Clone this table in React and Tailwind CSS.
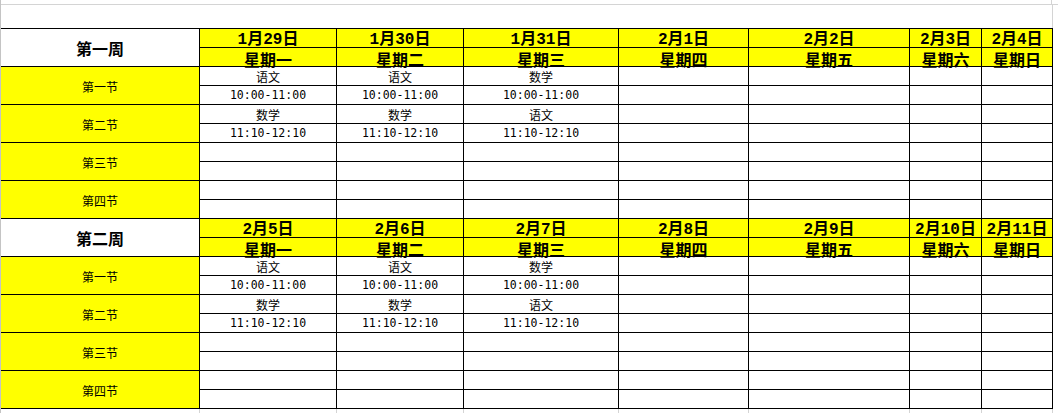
const weeks = [
  {
    name: "第一周",
    days: [
      ["1月29日", "星期一"],
      ["1月30日", "星期二"],
      ["1月31日", "星期三"],
      ["2月1日", "星期四"],
      ["2月2日", "星期五"],
      ["2月3日", "星期六"],
      ["2月4日", "星期日"],
    ],
  },
  {
    name: "第二周",
    days: [
      ["2月5日", "星期一"],
      ["2月6日", "星期二"],
      ["2月7日", "星期三"],
      ["2月8日", "星期四"],
      ["2月9日", "星期五"],
      ["2月10日", "星期六"],
      ["2月11日", "星期日"],
    ],
  },
];

// each period = two rows: subject, then time
const periods = [
  {
    name: "第一节",
    top: ["语文", "语文", "数学", "", "", "", ""],
    bottom: ["10:00-11:00", "10:00-11:00", "10:00-11:00", "", "", "", ""],
  },
  {
    name: "第二节",
    top: ["数学", "数学", "语文", "", "", "", ""],
    bottom: ["11:10-12:10", "11:10-12:10", "11:10-12:10", "", "", "", ""],
  },
  { name: "第三节", top: Array(7).fill(""), bottom: Array(7).fill("") },
  { name: "第四节", top: Array(7).fill(""), bottom: Array(7).fill("") },
];

const cjk = "font-['Noto_Sans_CJK_SC',sans-serif]";
const mixed = "font-['Liberation_Mono','Noto_Sans_CJK_SC',monospace]";
const mono = "font-['DejaVu_Sans_Mono',monospace]";
const cols =
  "grid-cols-[198px_136px_126px_154px_129px_160px_71px_70px]";

const App = () => {
  return (
    <div className="w-[1058px] h-[413px] bg-white border-l border-[#c4c4c4] overflow-hidden text-black">
      {/* spreadsheet rows above the table */}
      <div className="h-[4px] w-[1051px] border-r border-[#d4d4d4]" />
      <div className="h-[24px] border-t border-[#d4d4d4]">
        <div className="h-full w-[1052px] border-r border-[#d4d4d4]" />
      </div>

      <div
        className={`grid ${cols} auto-rows-[18px] gap-px bg-black pt-px pr-px pb-px w-[1052px]`}
      >
        {weeks.map((week) => (
          <>
            <div
              key={week.name}
              className={`row-span-2 bg-white flex items-center justify-center text-base font-bold ${cjk}`}
            >
              {week.name}
            </div>
            {week.days.map(([date]) => (
              <div
                key={week.name + date}
                className={`bg-[#ffff00] flex items-end justify-center text-base font-bold leading-[16px] ${mixed}`}
              >
                <span className="translate-y-px">{date}</span>
              </div>
            ))}
            {week.days.map(([date, day]) => (
              <div
                key={week.name + date + day}
                className={`bg-[#ffff00] flex items-end justify-center text-base font-bold leading-[16px] ${cjk}`}
              >
                <span className="translate-y-px">{day}</span>
              </div>
            ))}
            {periods.map((p) => (
              <>
                <div
                  key={week.name + p.name}
                  className={`row-span-2 bg-[#ffff00] flex items-center justify-center pt-[3px] text-xs ${cjk}`}
                >
                  {p.name}
                </div>
                {p.top.map((t, i) => (
                  <div
                    key={week.name + p.name + "t" + i}
                    className={`bg-white flex items-center justify-center pt-px text-xs leading-none ${cjk}`}
                  >
                    {t}
                  </div>
                ))}
                {p.bottom.map((t, i) => (
                  <div
                    key={week.name + p.name + "b" + i}
                    className={`bg-white flex items-center justify-center pt-px text-[11.5px] leading-none ${mono}`}
                  >
                    {t}
                  </div>
                ))}
              </>
            ))}
          </>
        ))}
      </div>

      {/* gridlines below the table */}
      <div className={`grid ${cols} gap-px bg-[#d4d4d4] pr-px w-[1052px] h-[5px]`}>
        {Array.from({ length: 8 }).map((_, i) => (
          <div key={i} className="bg-white" />
        ))}
      </div>
    </div>
  );
};

export default App;
